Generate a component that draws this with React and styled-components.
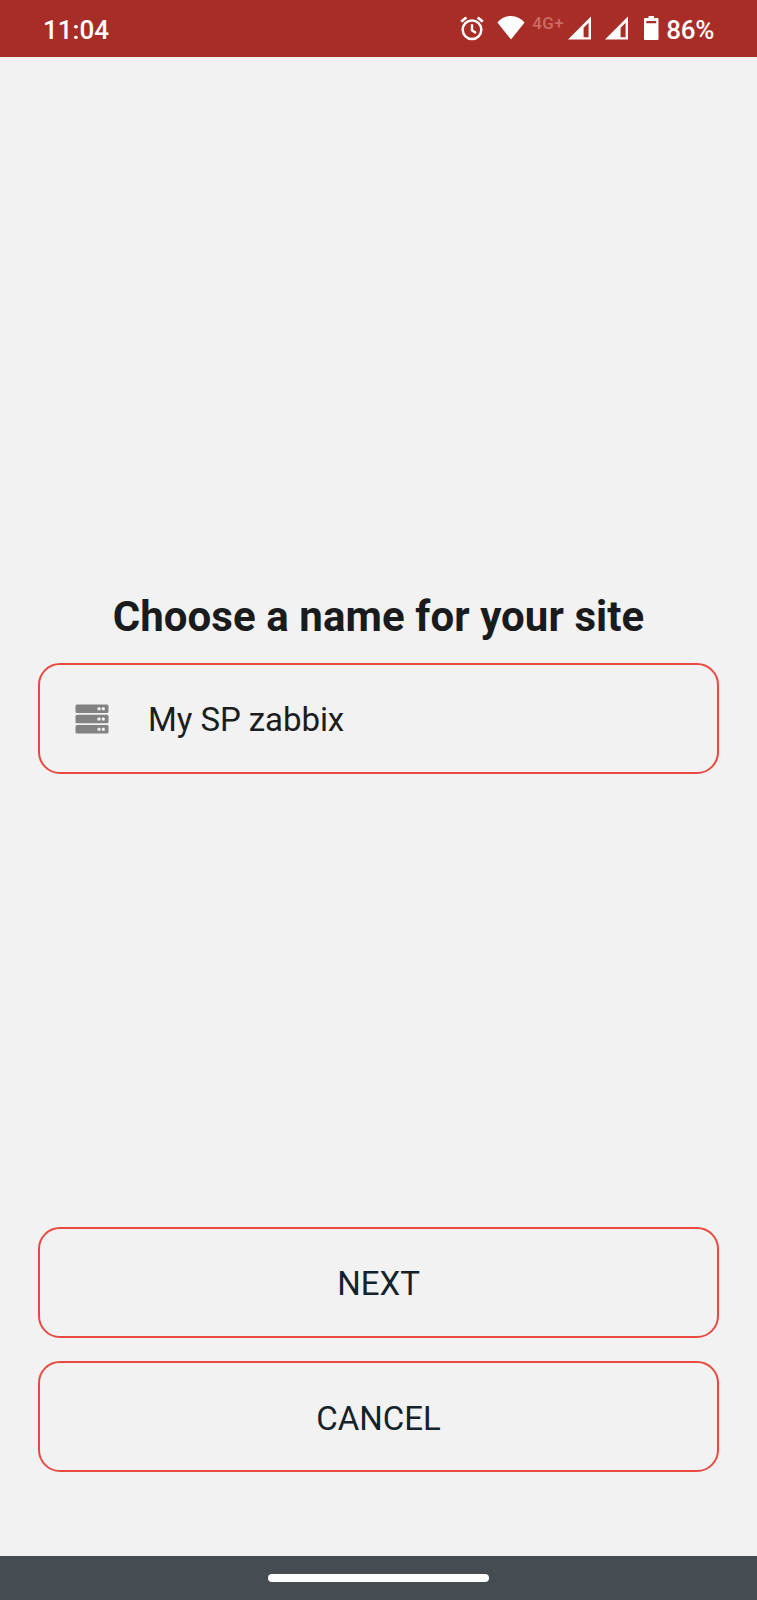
import React from 'react';
import styled, { createGlobalStyle } from 'styled-components';

const GlobalStyle = createGlobalStyle`
  *, *::before, *::after { box-sizing: border-box; }
  body {
    margin: 0;
    background: #f2f2f2;
    font-family: Roboto, "Liberation Sans", sans-serif;
  }
`;

const Screen = styled.div`
  display: flex;
  flex-direction: column;
  width: 757px;
  height: 1600px;
  background: #f2f2f2;
  overflow: hidden;
`;

const StatusBar = styled.header`
  display: flex;
  align-items: flex-start;
  justify-content: space-between;
  height: 57px;
  padding: 14px 43px 0;
  background: #a92d27;
  color: #fff;
`;

const StatusText = styled.span`
  padding-top: 1px;
  font-size: 26px;
  line-height: 31px;
  font-weight: 500;
  letter-spacing: ${({ $spacing }) => $spacing || '0'};
`;

const StatusIcons = styled.div`
  display: flex;
  align-items: flex-start;
  svg { display: block; flex: none; margin-top: 2px; }
`;

const NetworkLabel = styled.span`
  width: 36px;
  padding-left: 7.5px;
  font-size: 17px;
  line-height: 18px;
  font-weight: 500;
  letter-spacing: 0.4px;
  white-space: nowrap;
  color: #cb6c67;
`;

const Content = styled.main`
  flex: 1;
  display: flex;
  flex-direction: column;
  justify-content: space-between;
  padding: 533px 38px 84px;
`;

const Title = styled.h1`
  margin: 0 0 20px;
  height: 53px;
  font-size: 42px;
  line-height: 53px;
  font-weight: 700;
  letter-spacing: 0.08px;
  text-align: center;
  white-space: nowrap;
  color: #191b1c;
`;

const Field = styled.div`
  display: flex;
  align-items: center;
  gap: 39px;
  height: 111px;
  padding: 0 35px;
  border: 2px solid #e84a40;
  border-radius: 22px;
  svg { display: block; }
`;

const FieldValue = styled.span`
  padding-top: 2px;
  font-size: 33px;
  line-height: 40px;
  letter-spacing: -0.07px;
  color: #1c1d1e;
`;

const Actions = styled.div`
  display: flex;
  flex-direction: column;
  gap: 23px;
`;

const ActionButton = styled.button`
  height: 111px;
  padding: ${({ $drop }) => $drop || 2}px 0 0;
  border: 2px solid #e84a40;
  border-radius: 22px;
  background: transparent;
  font-family: inherit;
  font-size: 33px;
  line-height: 40px;
  color: #14232a;
`;

const NavigationBar = styled.footer`
  display: flex;
  justify-content: center;
  height: 44px;
  padding-top: 18px;
  background: #454d52;
`;

const HomeHandle = styled.div`
  width: 221px;
  height: 8px;
  border-radius: 4px;
  background: #fff;
`;

const AlarmIcon = () => (
  <svg width="24" height="25" viewBox="0 0 24 25" fill="none" stroke="#fff">
    <circle cx="12" cy="13.8" r="9.3" strokeWidth="2.5" />
    <path d="M12 8.3v6l4 2.8" strokeWidth="2.4" />
    <path d="M1.2 5.6 6.4 1.5M17.6 1.5l5.2 4.1" strokeWidth="2.7" />
  </svg>
);

const WifiIcon = () => (
  <svg width="28" height="24" viewBox="0 0 28 24">
    <path d="M14 23.5.4 6.4C4 2.3 8.7 0 14 0s10 2.3 13.6 6.4Z" fill="#fff" />
  </svg>
);

const SignalIcon = () => (
  <svg width="23" height="24" viewBox="0 0 23 24">
    <path fillRule="evenodd" d="M0 23.5 23 .5v23ZM15.6 11.8v9.4h5V6.8Z" fill="#fff" />
  </svg>
);

const BatteryIcon = () => (
  <svg width="15" height="24" viewBox="0 0 15 24">
    <path fillRule="evenodd" d="M4.5 0H10v2h3.500q1 0 1 1v20q0 1-1 1H1Q0 24 0 23V3Q0 2 1 2h3.500ZM2.300 5v2.200h9.900V5Z" fill="#fff" />
  </svg>
);

const ServerIcon = () => (
  <svg width="34" height="30" viewBox="0 0 34 30">
    {[0.5, 10.8, 21].map((y) => (
      <g key={y}>
        <rect x="0.5" y={y} width="33" height="8.5" rx="1.5" fill="#828282" />
        <rect x="22.5" y={y + 2.8} width="3" height="3" rx="0.9" fill="#f2f2f2" />
        <rect x="26.8" y={y + 2.8} width="3" height="3" rx="0.9" fill="#f2f2f2" />
      </g>
    ))}
  </svg>
);

const Gap = styled.i`
  flex: none;
  width: ${({ $w }) => $w}px;
`;

export default function App() {
  return (
    <>
      <GlobalStyle />
      <Screen>
        <StatusBar>
          <StatusText>11:04</StatusText>
          <StatusIcons>
            <AlarmIcon />
            <Gap $w={12.5} />
            <WifiIcon />
            <NetworkLabel>4G+</NetworkLabel>
            <Gap $w={7.5} />
            <SignalIcon />
            <Gap $w={13.5} />
            <SignalIcon />
            <Gap $w={16} />
            <BatteryIcon />
            <Gap $w={7.5} />
            <StatusText $spacing="-0.3px">86%</StatusText>
          </StatusIcons>
        </StatusBar>
        <Content>
          <section>
            <Title>Choose a name for your site</Title>
            <Field>
              <ServerIcon />
              <FieldValue>My SP zabbix</FieldValue>
            </Field>
          </section>
          <Actions>
            <ActionButton type="button">NEXT</ActionButton>
            <ActionButton type="button" $drop={4}>CANCEL</ActionButton>
          </Actions>
        </Content>
        <NavigationBar>
          <HomeHandle />
        </NavigationBar>
      </Screen>
    </>
  );
}
